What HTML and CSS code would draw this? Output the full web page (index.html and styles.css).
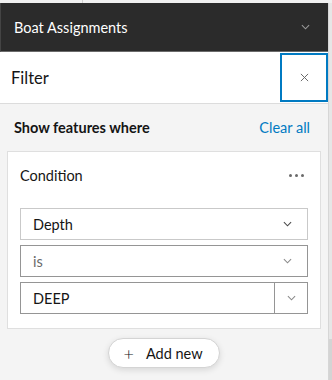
FILE: index.html
```html
<!DOCTYPE html>
<html lang="en">
<head>
  <meta charset="UTF-8"/>
  <title>Filter</title>
  <link rel="stylesheet" href="styles.css">
</head>
<body>
  <div class="top-strip"><span class="top-tick"></span></div>
  <div class="app">
    <div class="main">
      <!-- layer header -->
      <header class="layer-bar">
        <span class="layer-title">Boat Assignments</span>
        <svg class="layer-chev" viewBox="0 0 10 6"><path d="M1 1l4 4 4-4"/></svg>
      </header>

      <!-- panel title -->
      <div class="panel-head">
        <h2 class="panel-title">Filter</h2>
        <button class="close-btn" aria-label="Close">
          <svg viewBox="0 0 10 10"><path d="M1 1l8 8M9 1l-8 8"/></svg>
        </button>
      </div>

      <div class="panel-body">
        <div class="where-row">
          <span class="where-label">Show features where</span>
          <a class="clear-link" href="#">Clear all</a>
        </div>

        <div class="card">
          <div class="card-head">
            <span class="card-title">Condition</span>
            <span class="dots"><i></i><i></i><i></i></span>
          </div>
          <div class="fields">
            <div class="select light">
              <span class="select-text">Depth</span>
              <svg class="chev dark" viewBox="0 0 10 6"><path d="M1 1l4 4 4-4"/></svg>
            </div>
            <div class="select">
              <span class="select-text muted">is</span>
              <svg class="chev" viewBox="0 0 10 6"><path d="M1 1l4 4 4-4"/></svg>
            </div>
            <div class="select combo">
              <span class="select-text">DEEP</span>
              <span class="combo-btn">
                <svg class="chev" viewBox="0 0 10 6"><path d="M1 1l4 4 4-4"/></svg>
              </span>
            </div>
          </div>
        </div>

        <div class="add-row">
          <button class="add-btn"><span class="plus">+</span>Add new</button>
        </div>
      </div>
    </div>
    <div class="scroll-track"></div>
  </div>
</body>
</html>
```

FILE: styles.css
```css
*{margin:0;padding:0;box-sizing:border-box}
body{font-family:'Lato',sans-serif;background:#f3f3f3;color:#151515;width:332px;height:380px;overflow:hidden}
.top-strip{height:3px;background:#f0f0f0;display:flex}
.top-tick{width:83px;border-right:1px solid #cfcfcf}
.app{display:flex;height:377px}
.main{width:329px;border-right:1px solid #d6d6d6;background:#f4f4f4}
.scroll-track{flex:1;background:linear-gradient(#e6e6e6 336px,#d4d4d4 336px)}

.layer-bar{height:49px;background:#2b2b2b;border-left:1px solid #444;border-bottom:1px solid #6b6b6b;display:flex;align-items:center;padding:0 18px 0 13px}
.layer-title{color:#fff;font-size:14.5px;flex:1}
.layer-chev{width:9px;height:6px;fill:none;stroke:#9a9a9a;stroke-width:1.2}

.panel-head{height:52px;background:#fff;border-bottom:1px solid #dcdcdc;display:flex;align-items:center;padding:1px 0 1px 11px}
.panel-title{flex:1;font-size:16.5px;font-weight:400}
.close-btn{width:48px;height:49px;border:2px solid #007ac2;background:#fff;display:flex;align-items:center;justify-content:center;cursor:pointer}
.close-btn svg{width:9px;height:9px;fill:none;stroke:#6a6a6a;stroke-width:1.1}

.panel-body{padding:0 7px}
.where-row{height:47px;display:flex;align-items:center;justify-content:space-between;padding:0 11px 1px 7px}
.where-label{font-size:14.5px;font-weight:700}
.clear-link{font-size:14.5px;color:#007ac2;text-decoration:none}

.card{background:#fff;border:1px solid #dfdfdf;padding:0 12px 14px}
.card-head{height:46px;display:flex;align-items:center;justify-content:space-between}
.card-title{font-size:14.5px}
.dots{display:flex;gap:3px;padding-right:4px}
.dots i{width:3px;height:3px;border-radius:50%;background:#6a6a6a}
.fields{margin-top:10px;display:flex;flex-direction:column;gap:5px}
.select{height:32px;border:1px solid #959595;display:flex;align-items:center;padding:0 15px 0 12px}
.select.light{border-color:#c9c9c9}
.select-text{flex:1;font-size:14.5px}
.select-text.muted{color:#6a6a6a}
.chev{width:9px;height:6px;fill:none;stroke:#8a8a8a;stroke-width:1.2}
.chev.dark{stroke:#4a4a4a}
.select.combo{padding-right:0}
.combo-btn{width:33px;height:100%;border-left:1px solid #959595;display:flex;align-items:center;justify-content:center}

.add-row{display:flex;justify-content:center;margin-top:9px}
.add-btn{height:30px;padding:0 16px 0 14px;border:1px solid #d4d4d4;border-radius:15px;background:#fff;box-shadow:0 2px 6px rgba(0,0,0,.12);font:14.5px 'Lato',sans-serif;color:#151515;display:flex;align-items:center;cursor:pointer}
.plus{font-size:18px;font-weight:300;margin-right:12px;line-height:1}
```
